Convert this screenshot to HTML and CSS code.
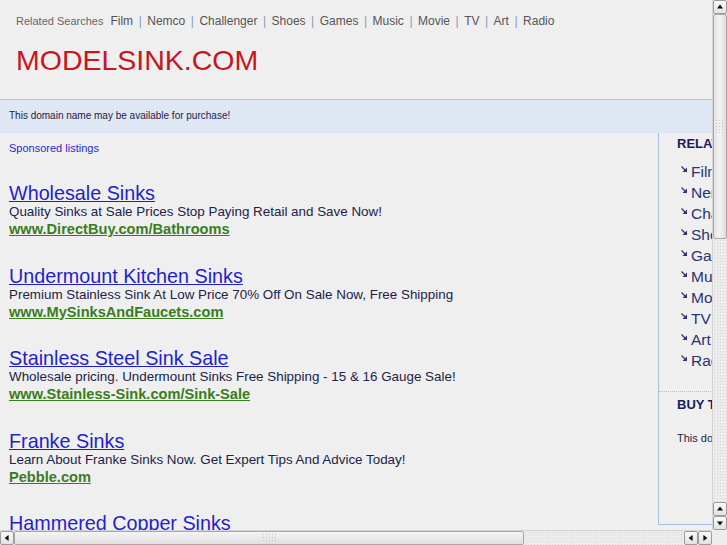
FILE: index.html
```html
<!DOCTYPE html>
<html lang="en">
<head>
    <meta charset="UTF-8">
    <title>modelsink.com</title>
    <link rel="stylesheet" href="styles.css">
</head>
<body>
    <div class="page">
        <div class="top">
            <div class="related-bar">
                <span class="related-label">Related Searches</span>
                <a href="#">Film</a><span class="sep">|</span>
                <a href="#">Nemco</a><span class="sep">|</span>
                <a href="#">Challenger</a><span class="sep">|</span>
                <a href="#">Shoes</a><span class="sep">|</span>
                <a href="#">Games</a><span class="sep">|</span>
                <a href="#">Music</a><span class="sep">|</span>
                <a href="#">Movie</a><span class="sep">|</span>
                <a href="#">TV</a><span class="sep">|</span>
                <a href="#">Art</a><span class="sep">|</span>
                <a href="#">Radio</a>
            </div>
            <h1 class="domain">MODELSINK.COM</h1>
        </div>

        <div class="banner">This domain name may be available for purchase!</div>

        <div class="main">
            <div class="listings">
                <div class="sponsored">Sponsored listings</div>

                <div class="ad">
                    <a class="ad-title" href="#">Wholesale Sinks</a>
                    <div class="ad-desc">Quality Sinks at Sale Prices Stop Paying Retail and Save Now!</div>
                    <a class="ad-url" href="#">www.DirectBuy.com/Bathrooms</a>
                </div>
                <div class="ad">
                    <a class="ad-title" href="#">Undermount Kitchen Sinks</a>
                    <div class="ad-desc">Premium Stainless Sink At Low Price 70% Off On Sale Now, Free Shipping</div>
                    <a class="ad-url" href="#">www.MySinksAndFaucets.com</a>
                </div>
                <div class="ad">
                    <a class="ad-title" href="#">Stainless Steel Sink Sale</a>
                    <div class="ad-desc">Wholesale pricing. Undermount Sinks Free Shipping - 15 &amp; 16 Gauge Sale!</div>
                    <a class="ad-url" href="#">www.Stainless-Sink.com/Sink-Sale</a>
                </div>
                <div class="ad">
                    <a class="ad-title" href="#">Franke Sinks</a>
                    <div class="ad-desc">Learn About Franke Sinks Now. Get Expert Tips And Advice Today!</div>
                    <a class="ad-url" href="#">Pebble.com</a>
                </div>
                <div class="ad">
                    <a class="ad-title" href="#">Hammered Copper Sinks</a>
                    <div class="ad-desc">Handcrafted Copper Sinks at Great Prices. Free Shipping on All Orders</div>
                    <a class="ad-url" href="#">www.CopperSinks.com</a>
                </div>
            </div>

            <div class="sidebar">
                <div class="side-block">
                    <h2 class="side-title">RELATED SEARCHES</h2>
                    <ul class="side-list">
                        <li><svg class="bullet" width="6" height="6" viewBox="0 0 6 6"><path d="M0.5 0.5 L4 4" stroke="#2b3470" stroke-width="1.2"/><polygon points="6,1.5 6,6 1.5,6" fill="#2b3470"/></svg><a href="#">Film</a></li>
                        <li><svg class="bullet" width="6" height="6" viewBox="0 0 6 6"><path d="M0.5 0.5 L4 4" stroke="#2b3470" stroke-width="1.2"/><polygon points="6,1.5 6,6 1.5,6" fill="#2b3470"/></svg><a href="#">Nemco</a></li>
                        <li><svg class="bullet" width="6" height="6" viewBox="0 0 6 6"><path d="M0.5 0.5 L4 4" stroke="#2b3470" stroke-width="1.2"/><polygon points="6,1.5 6,6 1.5,6" fill="#2b3470"/></svg><a href="#">Challenger</a></li>
                        <li><svg class="bullet" width="6" height="6" viewBox="0 0 6 6"><path d="M0.5 0.5 L4 4" stroke="#2b3470" stroke-width="1.2"/><polygon points="6,1.5 6,6 1.5,6" fill="#2b3470"/></svg><a href="#">Shoes</a></li>
                        <li><svg class="bullet" width="6" height="6" viewBox="0 0 6 6"><path d="M0.5 0.5 L4 4" stroke="#2b3470" stroke-width="1.2"/><polygon points="6,1.5 6,6 1.5,6" fill="#2b3470"/></svg><a href="#">Games</a></li>
                        <li><svg class="bullet" width="6" height="6" viewBox="0 0 6 6"><path d="M0.5 0.5 L4 4" stroke="#2b3470" stroke-width="1.2"/><polygon points="6,1.5 6,6 1.5,6" fill="#2b3470"/></svg><a href="#">Music</a></li>
                        <li><svg class="bullet" width="6" height="6" viewBox="0 0 6 6"><path d="M0.5 0.5 L4 4" stroke="#2b3470" stroke-width="1.2"/><polygon points="6,1.5 6,6 1.5,6" fill="#2b3470"/></svg><a href="#">Movie</a></li>
                        <li><svg class="bullet" width="6" height="6" viewBox="0 0 6 6"><path d="M0.5 0.5 L4 4" stroke="#2b3470" stroke-width="1.2"/><polygon points="6,1.5 6,6 1.5,6" fill="#2b3470"/></svg><a href="#">TV</a></li>
                        <li><svg class="bullet" width="6" height="6" viewBox="0 0 6 6"><path d="M0.5 0.5 L4 4" stroke="#2b3470" stroke-width="1.2"/><polygon points="6,1.5 6,6 1.5,6" fill="#2b3470"/></svg><a href="#">Art</a></li>
                        <li><svg class="bullet" width="6" height="6" viewBox="0 0 6 6"><path d="M0.5 0.5 L4 4" stroke="#2b3470" stroke-width="1.2"/><polygon points="6,1.5 6,6 1.5,6" fill="#2b3470"/></svg><a href="#">Radio</a></li>
                    </ul>
                </div>
                <div class="side-block buy">
                    <h2 class="side-title">BUY THIS DOMAIN</h2>
                    <p class="side-text">This domain may be for sale.</p>
                </div>
            </div>
        </div>
    </div>

    <!-- fake gtk scrollbars -->
    <div class="vscroll">
        <div class="sb-btn up"></div>
        <div class="sb-thumb v"><span class="grip"></span></div>
        <div class="sb-track"></div>
        <div class="sb-btn up"></div>
        <div class="sb-btn down"></div>
    </div>
    <div class="hscroll">
        <div class="sb-btn left"></div>
        <div class="sb-thumb h"><span class="grip"></span></div>
        <div class="sb-track"></div>
        <div class="sb-btn left"></div>
        <div class="sb-btn right"></div>
    </div>
    <div class="sb-corner"></div>
</body>
</html>
```

FILE: styles.css
```css
body {
    margin: 0;
    background-color: #efefef;
    font-family: "Liberation Sans", Arial, sans-serif;
    overflow: hidden;
}

a {
    text-decoration: none;
}

.page {
    width: 900px;
}

.top {
    padding: 14px 16px 0;
    height: 85px;
}

.related-bar {
    display: flex;
    align-items: baseline;
    gap: 5px;
    font-size: 12px;
    line-height: 14px;
    color: #555;
    white-space: nowrap;
}

.related-bar .related-label {
    font-size: 11px;
    color: #666;
    margin-right: 2px;
}

.related-bar a {
    color: #555;
}

.related-bar .sep {
    color: #8a9ab8;
    margin: 0 0.5px;
}

.domain {
    margin: 15px 0 0;
    font-size: 28.5px;
    line-height: 34px;
    font-weight: normal;
    color: #c8161c;
}

.banner {
    border-top: 1px solid #b4c0d6;
    background-color: #dfe6f4;
    color: #1c2348;
    font-size: 10px;
    line-height: 14px;
    padding: 9px 9px 10px;
}

.main {
    display: flex;
}

.listings {
    width: 649px;
    padding-left: 9px;
}

.sponsored {
    font-size: 11px;
    line-height: 14px;
    color: #2a2ad0;
    margin-top: 8px;
    margin-bottom: 27px;
}

.ad {
    margin-bottom: 26.5px;
}

.ad-title {
    display: block;
    font-size: 19.75px;
    line-height: 22px;
    color: #1f1fcc;
    text-decoration: underline;
}

.ad-desc {
    font-size: 13.4px;
    line-height: 16px;
    color: #1c2348;
}

.ad-url {
    display: inline-block;
    font-size: 14.6px;
    line-height: 15px;
    font-weight: bold;
    color: #3a7d1c;
    text-decoration: underline;
}

.sidebar {
    width: 230px;
    height: 391px;
    border-left: 1px solid #a9bfe2;
    border-bottom: 1px solid #a9bfe2;
}

.side-block {
    padding: 4px 0 0 18px;
}

.side-title {
    margin: 0;
    font-size: 13px;
    line-height: 14px;
    font-weight: bold;
    color: #17205a;
}

.side-list {
    list-style: none;
    margin: 10px 0 0;
    padding: 0 0 0 4px;
}

.side-list li {
    display: flex;
    align-items: center;
    height: 21px;
    font-size: 15.5px;
}

.side-list a {
    color: #2b3470;
}

.bullet {
    flex: none;
    margin-right: 4px;
    margin-top: -5px;
}

.buy {
    margin-top: 20px;
    border-top: 1px dotted #a9bfe2;
    padding-top: 6px;
}

.side-text {
    margin: 20px 0 0;
    font-size: 11px;
    color: #1c2348;
}

/* scrollbars */
.vscroll {
    position: fixed;
    top: 0;
    right: 0;
    width: 15px;
    height: 530px;
    display: flex;
    flex-direction: column;
    background-color: #ececec;
    border-left: 1px solid #d4d4d4;
    box-sizing: border-box;
}

.hscroll {
    position: fixed;
    left: 0;
    bottom: 0;
    width: 712px;
    height: 15px;
    display: flex;
    background-color: #ececec;
    border-top: 1px solid #d4d4d4;
    box-sizing: border-box;
}

.sb-corner {
    position: fixed;
    right: 0;
    bottom: 0;
    width: 15px;
    height: 15px;
    background-color: #ececec;
}

.sb-track {
    flex: 1;
    background-image: radial-gradient(#d8d8d8 0.6px, transparent 0.8px);
    background-size: 3px 3px;
}

.sb-btn {
    flex: none;
    width: 14px;
    height: 14px;
    box-sizing: border-box;
    border: 1px solid #9c9c9c;
    border-radius: 2px;
    background: linear-gradient(#fafafa, #e2e2e2);
    position: relative;
}

.sb-btn::after {
    content: "";
    position: absolute;
    left: 50%;
    top: 50%;
    border: 3px solid transparent;
}

.sb-btn.up::after {
    border-bottom: 4px solid #111;
    border-top-width: 0;
    transform: translate(-50%, -60%);
}

.sb-btn.down::after {
    border-top: 4px solid #111;
    border-bottom-width: 0;
    transform: translate(-50%, -40%);
}

.sb-btn.left::after {
    border-right: 4px solid #111;
    border-left-width: 0;
    transform: translate(-60%, -50%);
}

.sb-btn.right::after {
    border-left: 4px solid #111;
    border-right-width: 0;
    transform: translate(-40%, -50%);
}

.sb-thumb {
    flex: none;
    box-sizing: border-box;
    border: 1px solid #a8a8a8;
    border-radius: 2px;
    display: flex;
    justify-content: center;
    align-items: center;
}

.sb-thumb.v {
    height: 225px;
    background: linear-gradient(90deg, #e4e4e4, #f4f4f4 50%, #dcdcdc);
}

.sb-thumb.h {
    width: 510px;
    background: linear-gradient(#f4f4f4, #e0e0e0);
}

.grip {
    background-image: radial-gradient(#c4c4c4 0.7px, transparent 0.9px);
    background-size: 3px 3px;
}

.sb-thumb.v .grip {
    width: 10px;
    height: 15px;
}

.sb-thumb.h .grip {
    width: 15px;
    height: 10px;
}
```
